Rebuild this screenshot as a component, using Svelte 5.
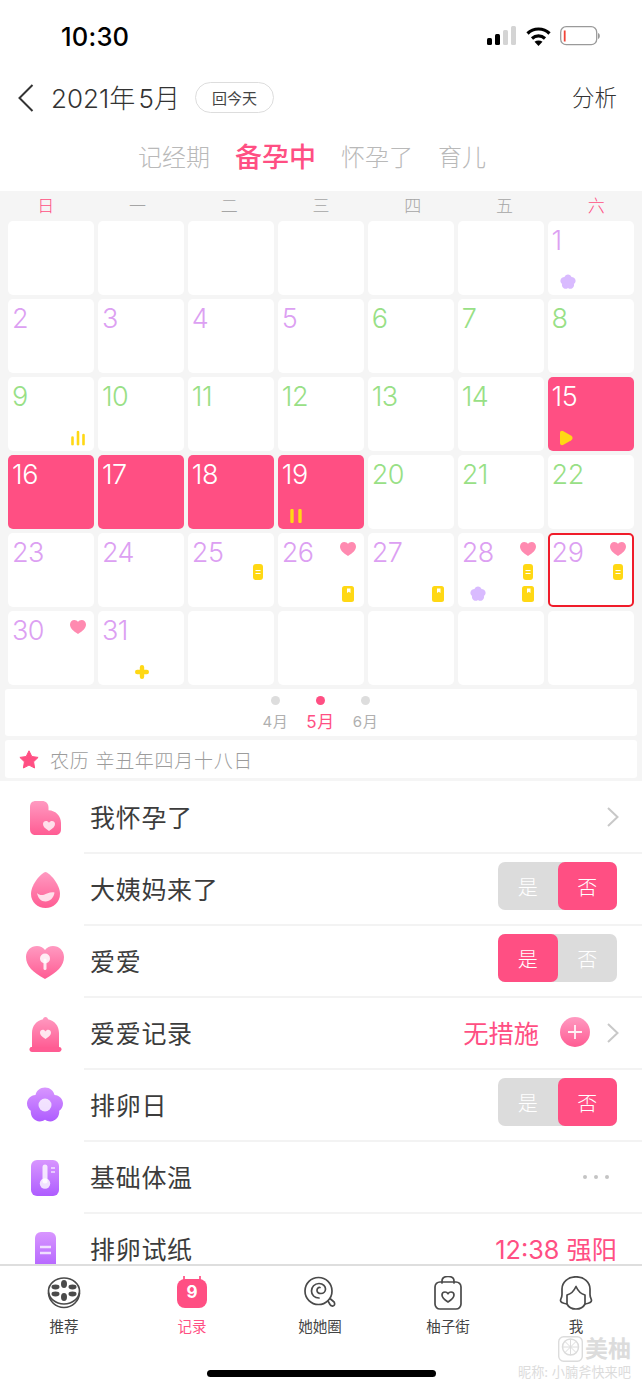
<script lang="ts">
  const weekdays = ['日', '一', '二', '三', '四', '五', '六'];

  // kind: p = purple number, g = green number, on = period day
  const days: any[] = [
    ...Array(6).fill({}),
    { n: 1, kind: 'p', marks: [['flower', 'bl']] },
    { n: 2, kind: 'p' }, { n: 3, kind: 'p' }, { n: 4, kind: 'p' }, { n: 5, kind: 'p' },
    { n: 6, kind: 'g' }, { n: 7, kind: 'g' }, { n: 8, kind: 'g' },
    { n: 9, kind: 'g', marks: [['bars', 'br']] },
    { n: 10, kind: 'g' }, { n: 11, kind: 'g' }, { n: 12, kind: 'g' }, { n: 13, kind: 'g' }, { n: 14, kind: 'g' },
    { n: 15, kind: 'on', marks: [['play', 'bl']] },
    { n: 16, kind: 'on' }, { n: 17, kind: 'on' }, { n: 18, kind: 'on' },
    { n: 19, kind: 'on', marks: [['pause', 'bl']] },
    { n: 20, kind: 'g' }, { n: 21, kind: 'g' }, { n: 22, kind: 'g' },
    { n: 23, kind: 'p' }, { n: 24, kind: 'p' },
    { n: 25, kind: 'p', marks: [['strip', 'mr']] },
    { n: 26, kind: 'p', marks: [['heart', 'tr'], ['note', 'br']] },
    { n: 27, kind: 'p', marks: [['note', 'br']] },
    { n: 28, kind: 'p', marks: [['heart', 'tr'], ['strip', 'mr'], ['note', 'br'], ['flower', 'bl']] },
    { n: 29, kind: 'p', today: true, marks: [['heart', 'tr'], ['strip', 'mr']] },
    { n: 30, kind: 'p', marks: [['heart', 'tr']] },
    { n: 31, kind: 'p', marks: [['plus', 'bc']] },
    ...Array(5).fill({})
  ];

  const rows: any[] = [
    { icon: 'preg', label: '我怀孕了', type: 'arrow' },
    { icon: 'drop', label: '大姨妈来了', type: 'toggle', yes: false },
    { icon: 'love', label: '爱爱', type: 'toggle', yes: true },
    { icon: 'bell', label: '爱爱记录', type: 'record' },
    { icon: 'ovul', label: '排卵日', type: 'toggle', yes: false },
    { icon: 'temp', label: '基础体温', type: 'dots' },
    { icon: 'test', label: '排卵试纸', type: 'text' }
  ];

  const tabs = [
    { id: 'rec', label: '推荐' },
    { id: 'cal', label: '记录', active: true },
    { id: 'circle', label: '她她圈' },
    { id: 'shop', label: '柚子街' },
    { id: 'me', label: '我' }
  ];
</script>

{#snippet mark(kind)}
  {#if kind === 'heart'}
    <svg width="16" height="14" viewBox="0 0 16 14"><path d="M8 14C3 11 0 8.300 0 4.600 0 2 2 0 4.300 0 5.800 0 7.200.7 8 1.900 8.800.7 10.200 0 11.700 0 14 0 16 2 16 4.600 16 8.300 13 11 8 14Z" fill="#ff8ab0"/></svg>
  {:else if kind === 'strip'}
    <svg width="10" height="16" viewBox="0 0 10 16"><rect width="10" height="16" rx="3" fill="#ffd814"/><path d="M2.500 6.500h5M2.500 9.500h5" stroke="#fff" stroke-width="1.200"/></svg>
  {:else if kind === 'note'}
    <svg width="12" height="16" viewBox="0 0 12 16"><rect width="12" height="16" rx="2.500" fill="#ffd814"/><path d="M5 2.500h3.500v4.500L6.750 5.800 5 7Z" fill="#fff"/></svg>
  {:else if kind === 'flower'}
    <svg width="16" height="16" viewBox="0 0 16 16"><path d="M8 .5c1.700 0 3 1 3.500 2.400 1.700.1 3.600 1.200 4 3 .4 1.600-.4 3-1.500 3.900.3 1.500-.1 3.400-1.700 4.400-1.500 1-3.200.6-4.300-.3-1.100.9-2.800 1.300-4.300.3C2.100 13.200 1.700 11.300 2 9.800.9 8.900.1 7.500.5 5.900c.4-1.800 2.300-2.900 4-3C5 1.500 6.300.5 8 .5Z" fill="#d9bbff"/></svg>
  {:else if kind === 'bars'}
    <svg width="14" height="15" viewBox="0 0 14 15"><path d="M1.500 7V14M7 1.500V14M12.500 4.500V14" stroke="#ffd814" stroke-width="2.600" stroke-linecap="round"/></svg>
  {:else if kind === 'play'}
    <svg width="14" height="15" viewBox="0 0 14 15"><path d="M1 2.500C1 .8 2.400-.2 4 .6l8.300 4.600c1.700 1 1.700 3.600 0 4.600L4 14.400c-1.600.8-3-.2-3-1.900Z" fill="#ffd814"/></svg>
  {:else if kind === 'pause'}
    <svg width="12" height="14" viewBox="0 0 12 14"><path d="M2 1.500v11M10 1.500v11" stroke="#ffd814" stroke-width="3.400" stroke-linecap="round"/></svg>
  {:else if kind === 'plus'}
    <svg width="14" height="14" viewBox="0 0 16 16"><path d="M8 2.500v11M2.500 8h11" stroke="#ffd814" stroke-width="5" stroke-linecap="round"/></svg>
  {/if}
{/snippet}

{#snippet rowIcon(kind)}
  <svg width="40" height="40" viewBox="0 0 40 40">
    <defs>
      <linearGradient id="gp-{kind}" x1="0" y1="0" x2="0" y2="1"><stop offset="0" stop-color="#ff9ac1"/><stop offset="1" stop-color="#ff5c93"/></linearGradient>
      <linearGradient id="gv-{kind}" x1="0" y1="0" x2="0" y2="1"><stop offset="0" stop-color="#d896ff"/><stop offset="1" stop-color="#ae5cff"/></linearGradient>
    </defs>
    {#if kind === 'preg'}
      <path d="M11 3h6c4 0 6.500 2.500 6.500 6.500v2.700C31 12.500 36 18 36 25v6c0 4-2 6-6 6H11c-4 0-6-2-6-6V9c0-4 2-6 6-6Z" fill="url(#gp-preg)"/>
      <path d="M24 33c-4.200-2.700-6-4.600-6-7 0-1.800 1.400-3 3-3 1.200 0 2.300.6 3 1.700.7-1.100 1.800-1.700 3-1.700 1.600 0 3 1.200 3 3 0 2.400-1.800 4.300-6 7Z" fill="#fff" opacity=".78"/>
    {:else if kind === 'drop'}
      <path d="M20.500 2c3 0 14.500 11.500 14.500 22 0 8-6.500 14-14.500 14S6 32 6 24C6 13.500 17.500 2 20.500 2Z" fill="url(#gp-drop)"/>
      <path d="M12 23c2 2 4.500 2.500 7 1.700s6-3 10.500-2.200c-.5 5-4.500 9-9 9s-7.500-3.500-8.500-8.500Z" fill="#fff" opacity=".78"/>
    {:else if kind === 'love'}
      <path d="M20 37C8 30.500 1 24 1 15 1 8.500 6 4 12 4c3.200 0 6 1.500 8 4 2-2.500 4.800-4 8-4 6 0 11 4.500 11 11 0 9-7 15.500-19 22Z" fill="url(#gp-love)"/>
      <circle cx="20" cy="16.500" r="5" fill="#fff" opacity=".85"/>
      <path d="M20 18v8.500" stroke="#fff" stroke-width="3" stroke-linecap="round" opacity=".85"/>
    {:else if kind === 'bell'}
      <g transform="translate(.5 2)">
        <path d="M20 1c1.500 0 2.400 1 2.500 2.300C29 4.500 33.500 10 33.500 17v15h-27V17C6.500 10 11 4.500 17.500 3.300 17.600 2 18.500 1 20 1Z" fill="url(#gp-bell)"/>
        <path d="M6.500 31h27c2 0 2.500 1 2.500 2.300S35 36 33.500 36h-27C5 36 4 35 4 33.300S5 31 6.500 31Z" fill="#ff5c93"/>
        <path d="M20 23c-3.800-2.400-5.500-4.100-5.500-6.300 0-1.600 1.300-2.900 2.800-2.900 1.100 0 2.100.6 2.700 1.600.6-1 1.600-1.600 2.700-1.600 1.500 0 2.800 1.300 2.800 2.900 0 2.200-1.700 3.900-5.500 6.300Z" fill="#fff" opacity=".82"/>
      </g>
    {:else if kind === 'ovul'}
      <path d="M20 1.500c5 0 8.700 3.400 9.500 7.500 5 .3 8.500 4.300 8.500 8.500 0 3.200-1.500 5.700-3.800 7.300.7 5.700-3.800 10.700-9 10.700-1.900 0-3.500-.5-5.200-1.700-1.700 1.200-3.300 1.700-5.200 1.700-5.200 0-9.700-5-9-10.700C3.500 23.200 2 20.700 2 17.500 2 13.300 5.500 9.300 10.500 9 11.300 4.900 15 1.500 20 1.500Z" fill="url(#gv-ovul)"/>
      <circle cx="20" cy="19" r="6.500" fill="#fff" opacity=".78"/>
    {:else if kind === 'temp'}
      <rect x="6" y="2" width="28" height="36" rx="6" fill="url(#gv-temp)"/>
      <path d="M20 9v14" stroke="#fff" stroke-width="5" stroke-linecap="round" opacity=".8"/>
      <circle cx="20" cy="25.500" r="5.200" fill="#fff" opacity=".8"/>
      <path d="M26 10h4M26 14h4" stroke="#fff" stroke-width="1.700" opacity=".75"/>
    {:else if kind === 'test'}
      <rect x="10" y="2" width="21" height="42" rx="6" fill="url(#gv-test)"/>
      <path d="M15 17h11M15 23h11" stroke="#fff" stroke-width="2.400" opacity=".75"/>
    {/if}
  </svg>
{/snippet}

{#snippet tabIcon(id)}
  <svg width="34" height="34" viewBox="0 0 34 34" fill="none" stroke="#4a4a4a" stroke-width="1.700" stroke-linecap="round" stroke-linejoin="round">
    {#if id === 'rec'}
      <ellipse cx="17" cy="15" rx="15.500" ry="13"/>
      <path d="M1.500 17c.5 8 7 14.500 15.500 14.500S32 25 32.500 17"/>
      <g fill="#4a4a4a" stroke="none">
        <ellipse cx="17" cy="8" rx="3" ry="4"/><ellipse cx="8.500" cy="11" rx="4" ry="2.400"/><ellipse cx="25.500" cy="11" rx="4" ry="2.400"/>
        <ellipse cx="8.500" cy="18" rx="4" ry="2.400"/><ellipse cx="25.500" cy="18" rx="4" ry="2.400"/><ellipse cx="17" cy="21" rx="3" ry="4"/>
      </g>
    {:else if id === 'cal'}
      <path d="M9 0v5M25 0v5" stroke="#ff4f83"/>
      <rect x="2" y="3" width="30" height="29" rx="8" fill="#ff4f83" stroke="none"/>
    {:else if id === 'circle'}
      <circle cx="15.500" cy="15" r="13.500"/>
      <path d="M16 22c-4.500 0-7.500-3-7.500-7s3-7.500 7.500-7.500 6.500 3 6.500 5.500-2 4.500-4.500 4.500-4-1.500-4-3.300 1.300-3 3-2.700"/>
      <path d="M25 25l2 3.500c1 1.500 3 2 4 1s.8-3-.5-4L27.500 23"/>
    {:else if id === 'shop'}
      <path d="M11 7V5c0-3 2.500-4.500 6-4.500S23 2 23 5v2"/>
      <rect x="4" y="6" width="26" height="27" rx="5"/>
      <path d="M17 26c-4-2.600-6-4.500-6-7 0-1.800 1.400-3 3-3 1.200 0 2.300.6 3 1.700.7-1.100 1.800-1.700 3-1.700 1.600 0 3 1.200 3 3 0 2.500-2 4.400-6 7Z"/>
    {:else if id === 'me'}
      <path d="M8 28c-3-.5-6.500-1.500-6.500-3.500 0-1.500 1.500-3 1.500-6V13C3 6 9 .8 17 .8S31 6 31 13v5.500c0 3 1.500 4.500 1.500 6 0 2-3.500 3-6.500 3.500"/>
      <path d="M8 19v9c1.500 3 5 5 9 5s7.500-2 9-5v-9c-4-1-7-4-9-8.500-2 4.500-5 7.500-9 8.500Z"/>
    {/if}
  </svg>
{/snippet}

<div class="page">
  <div class="status">
    <span class="time">10:30</span>
    <div class="status-icons">
      <svg width="30" height="20" viewBox="0 0 30 20"><rect x="0" y="12" width="5" height="7" rx="1.500" fill="#000"/><rect x="8" y="8" width="5" height="11" rx="1.500" fill="#000"/><rect x="16" y="4" width="5" height="15" rx="1.500" fill="#d4d4d4"/><rect x="24" y="0" width="5" height="19" rx="1.500" fill="#d4d4d4"/></svg>
      <svg width="25" height="20" viewBox="0 0 25 20" fill="none" stroke="#000" stroke-width="3.200"><path d="M1.500 7.500C7.500 1.500 17.500 1.500 23.500 7.500"/><path d="M6 12.500c3.800-3.400 9.200-3.400 13 0"/><path d="M12.500 20l-4-4.200c2.200-1.600 5.800-1.600 8 0Z" fill="#000" stroke="none"/></svg>
      <svg width="40" height="20" viewBox="0 0 40 20"><rect x=".7" y=".7" width="36" height="18" rx="5.500" fill="#fff" stroke="#9a9a9a" stroke-width="1.300"/><rect x="3.800" y="4.500" width="1.800" height="11" fill="#f04438"/><path d="M38 7c1.300.4 1.800 1.600 1.800 3s-.5 2.600-1.800 3Z" fill="#9a9a9a"/></svg>
    </div>
  </div>

  <div class="nav">
    <svg class="back" width="18" height="30" viewBox="0 0 18 30" fill="none" stroke="#333" stroke-width="2"><path d="M15.500 2 2.500 15l13 13"/></svg>
    <span class="month">2021年 5月</span>
    <span class="today-btn">回今天</span>
    <span class="analyse">分析</span>
  </div>

  <div class="modes">
    <span>记经期</span>
    <span class="active">备孕中</span>
    <span>怀孕了</span>
    <span>育儿</span>
  </div>

  <div class="calendar">
    <div class="weekdays">
      {#each weekdays as w, i}
        <span class:weekend={i === 0 || i === 6}>{w}</span>
      {/each}
    </div>
    <div class="grid">
      {#each days as d}
        <div class="cell {d.kind ?? ''}" class:today={d.today}>
          {#if d.n}<span class="num">{d.n}</span>{/if}
          {#each d.marks ?? [] as [kind, pos]}
            <span class="mark {pos} {kind}">{@render mark(kind)}</span>
          {/each}
        </div>
      {/each}
    </div>
    <div class="months">
      <div class="m"><i></i><span>4月</span></div>
      <div class="m active"><i></i><span>5月</span></div>
      <div class="m"><i></i><span>6月</span></div>
    </div>
    <div class="lunar">
      <svg width="20" height="19" viewBox="0 0 20 19"><path d="M10 .8l2.800 5.700 6.300.9-4.500 4.400 1 6.200L10 15.100 4.400 18l1-6.200L.9 7.400l6.300-.9Z" fill="#ff4f83" stroke="#ff4f83" stroke-linejoin="round"/></svg>
      <span>农历 辛丑年四月十八日</span>
    </div>
  </div>

  <div class="list">
    {#each rows as r}
      <div class="row">
        <span class="row-icon">{@render rowIcon(r.icon)}</span>
        <div class="row-main">
          <span class="label">{r.label}</span>
          {#if r.type === 'arrow'}
            <svg class="chev" width="14" height="22" viewBox="0 0 14 22" fill="none" stroke="#c8c8c8" stroke-width="2"><path d="M2 2l9.500 9L2 20"/></svg>
          {:else if r.type === 'toggle'}
            <div class="toggle">
              <span class:on={r.yes}>是</span>
              <span class:on={!r.yes}>否</span>
            </div>
          {:else if r.type === 'record'}
            <span class="value">无措施</span>
            <span class="add">
              <svg width="16" height="16" viewBox="0 0 16 16" stroke="#fff" stroke-width="1.800" opacity=".9"><path d="M8 1v14M1 8h14"/></svg>
            </span>
            <svg class="chev" width="14" height="22" viewBox="0 0 14 22" fill="none" stroke="#c8c8c8" stroke-width="2"><path d="M2 2l9.500 9L2 20"/></svg>
          {:else if r.type === 'dots'}
            <span class="dots"><i></i><i></i><i></i></span>
          {:else if r.type === 'text'}
            <span class="value">12:38 强阳</span>
          {/if}
        </div>
      </div>
    {/each}
  </div>

  <div class="tabbar">
    {#each tabs as t}
      <div class="tab" class:active={t.active}>
        <span class="tab-icon">
          {@render tabIcon(t.id)}
          {#if t.id === 'cal'}<b>9</b>{/if}
        </span>
        <span>{t.label}</span>
      </div>
    {/each}
    <div class="home"></div>
    <div class="watermark">
      <div class="wm-logo">
        <svg width="25" height="26" viewBox="0 0 25 26" fill="none" stroke="#dcdcdc"><rect x=".7" y=".7" width="23.600" height="24.600" rx="5" stroke-width="1.400"/><circle cx="12.500" cy="11" r="8" stroke-width="1.500"/><path d="M12.500 3v16M4.500 11h16M6.500 5l12 12M18.500 5l-12 12" stroke-width="1"/></svg>
        <span>美柚</span>
      </div>
      <div class="wm-name">昵称: 小腩斧快来吧</div>
    </div>
  </div>
</div>

<style>
  :global(body) {
    margin: 0;
    background: #fff;
  }
  .page {
    width: 642px;
    height: 1389px;
    display: flex;
    flex-direction: column;
    overflow: hidden;
    font-family: Inter, "Noto Sans CJK SC", sans-serif;
    color: #333;
  }

  .status {
    height: 72px;
    flex: none;
    display: flex;
    align-items: center;
    justify-content: space-between;
    padding: 0 42px 0 61px;
  }
  .time {
    font-size: 25.500px;
    font-weight: 500;
    color: #000;
    letter-spacing: 0.2px;
  }
  .status-icons {
    display: flex;
    align-items: center;
    gap: 9px;
  }

  .nav {
    height: 52px;
    flex: none;
    display: flex;
    align-items: center;
    padding: 0 25px 0 17px;
  }
  .back {
    margin-right: 16px;
  }
  .month {
    font-size: 26px;
    font-weight: 300;
    color: #333;
    word-spacing: -4px;
    margin-top: -3px;
  }
  .today-btn {
    margin-left: 15px;
    margin-top: -2px;
    width: 79px;
    height: 31px;
    box-sizing: border-box;
    border: 1.500px solid #ddd;
    border-radius: 16px;
    display: flex;
    align-items: center;
    justify-content: center;
    font-size: 15px;
    color: #444;
  }
  .analyse {
    margin-left: auto;
    font-size: 22.500px;
    font-weight: 300;
    margin-top: -4px;
  }

  .modes {
    height: 67px;
    flex: none;
    display: flex;
    align-items: center;
    justify-content: center;
    gap: 25px;
    padding: 0 18px 4px 0;
    box-sizing: border-box;
    font-size: 24px;
    font-weight: 300;
    color: #b9b9b9;
  }
  .modes .active {
    font-size: 27px;
    font-weight: 500;
    color: #ff4f83;
  }

  .calendar {
    height: 590px;
    flex: none;
    background: #f5f5f5;
  }
  .weekdays {
    height: 30px;
    padding-bottom: 3px;
    box-sizing: border-box;
    display: grid;
    grid-template-columns: repeat(7, 1fr);
    align-items: center;
    justify-items: center;
    font-size: 17px;
    font-weight: 300;
    color: #a5a5a5;
  }
  .weekdays .weekend {
    color: #ff4f83;
  }
  .grid {
    padding: 0 8px;
    display: grid;
    grid-template-columns: repeat(7, 1fr);
    grid-auto-rows: 74px;
    gap: 4px 3.500px;
  }
  .cell {
    position: relative;
    background: #fff;
    border-radius: 5px;
    box-sizing: border-box;
  }
  .num {
    position: absolute;
    left: 4px;
    top: 5px;
    font-size: 27px;
    font-weight: 300;
    line-height: 30px;
    letter-spacing: -0.5px;
  }
  .cell.p .num { color: #dca0f2; }
  .cell.g .num { color: #98e086; }
  .cell.on { background: #ff4f83; }
  .cell.on .num { color: #fff; }
  .cell.today {
    border: 2px solid #f01c2a;
  }
  .cell.today .num { left: 2px; top: 3px; }

  .mark {
    position: absolute;
    display: flex;
    transform: translate(-50%, -50%);
    left: 70px;
  }
  .mark svg { display: block; }
  .mark.tr { top: 16px; }
  .mark.mr { top: 39px; }
  .mark.br { top: 61px; }
  .mark.bl { top: 61px; left: 20px; }
  .mark.bc { top: 61px; left: 44px; }
  .cell.today .mark { margin: -2px 0 0 -2px; }
  .cell.on .mark.bl { left: 18px; }

  .months {
    margin: 4px 5px 0;
    height: 47px;
    background: #fff;
    border-radius: 3px;
    display: flex;
    justify-content: center;
    gap: 24px;
    padding-right: 1px;
  }
  .m {
    width: 21px;
    display: flex;
    flex-direction: column;
    align-items: center;
    font-size: 15px;
    line-height: 20px;
    color: #b0b0b0;
    white-space: nowrap;
    letter-spacing: 0.6px;
  }
  .m i {
    width: 9px;
    height: 9px;
    margin: 7px 0 7px;
    border-radius: 50%;
    background: #ddd;
  }
  .m.active { color: #ff4f83; font-size: 17px; }
  .m.active i { background: #ff4f83; }

  .lunar {
    margin: 4px 5px 0;
    height: 38px;
    background: #fff;
    border-radius: 3px;
    display: flex;
    align-items: center;
    gap: 11px;
    padding-left: 14px;
    font-size: 19px;
    letter-spacing: 0.7px;
    font-weight: 300;
    color: #9c9c9c;
  }

  .list {
    flex: 1;
    min-height: 0;
    overflow: hidden;
    background: #fff;
    padding-top: 1px;
  }
  .row {
    height: 72px;
    display: flex;
    align-items: stretch;
    padding-left: 25px;
  }
  .row-icon {
    width: 40px;
    margin-right: 19px;
    display: flex;
    align-items: center;
  }
  .row-main {
    flex: 1;
    display: flex;
    align-items: center;
    padding: 0 25px 0 7px;
    border-bottom: 2px solid #f3f3f3;
  }
  .label {
    font-size: 25px;
    font-weight: 400;
    color: #3c3c3c;
    margin: 0 auto 2px -1px;
    letter-spacing: 0.7px;
  }
  .chev {
    flex: none;
    margin-right: -3px;
  }
  .toggle {
    display: flex;
    width: 119px;
    height: 48px;
    margin-bottom: 6px;
    background: #dcdcdc;
    border-radius: 7px;
    font-size: 20px;
    font-weight: 300;
    color: #fff;
  }
  .toggle span {
    flex: 1;
    display: flex;
    align-items: center;
    justify-content: center;
    border-radius: 7px;
  }
  .toggle .on { background: #ff4f83; }
  .value {
    font-size: 25.250px;
    font-weight: 400;
    color: #ff4f83;
    margin-bottom: 2px;
  }
  .add {
    margin: 0 16px 2px 21px;
    width: 30px;
    height: 30px;
    border-radius: 50%;
    background: linear-gradient(#ff9ac1, #ff5c93);
    display: flex;
    align-items: center;
    justify-content: center;
  }
  .dots {
    display: flex;
    gap: 7px;
    margin-right: 8px;
  }
  .dots i {
    width: 4px;
    height: 4px;
    border-radius: 50%;
    background: #c4c4c4;
  }

  .tabbar {
    position: relative;
    height: 125px;
    flex: none;
    box-sizing: border-box;
    border-top: 2px solid #dedede;
    background: #fff;
    display: grid;
    grid-template-columns: repeat(5, 1fr);
    padding: 10px 2px 0 0;
  }
  .tab {
    display: flex;
    flex-direction: column;
    align-items: center;
    gap: 5px;
    font-size: 14.500px;
    font-weight: 400;
    color: #444;
  }
  .tab.active { color: #ff4f83; }
  .tab-icon {
    position: relative;
    height: 34px;
    display: flex;
  }
  .tab-icon b {
    position: absolute;
    left: 0;
    right: 0;
    top: 6px;
    text-align: center;
    color: #fff;
    font-size: 17px;
    font-weight: 700;
  }
  .home {
    position: absolute;
    left: 207px;
    top: 104px;
    width: 229px;
    height: 7px;
    border-radius: 4px;
    background: #000;
  }
  .watermark {
    position: absolute;
    right: 11px;
    top: 70px;
    text-align: right;
    color: #dcdcdc;
  }
  .wm-logo {
    display: flex;
    justify-content: flex-end;
    align-items: center;
    gap: 2px;
    font-size: 23px;
    font-weight: 700;
    line-height: 26px;
  }
  .wm-name {
    font-size: 13.200px;
    line-height: 16px;
    margin-top: 2px;
    white-space: nowrap;
  }
</style>
